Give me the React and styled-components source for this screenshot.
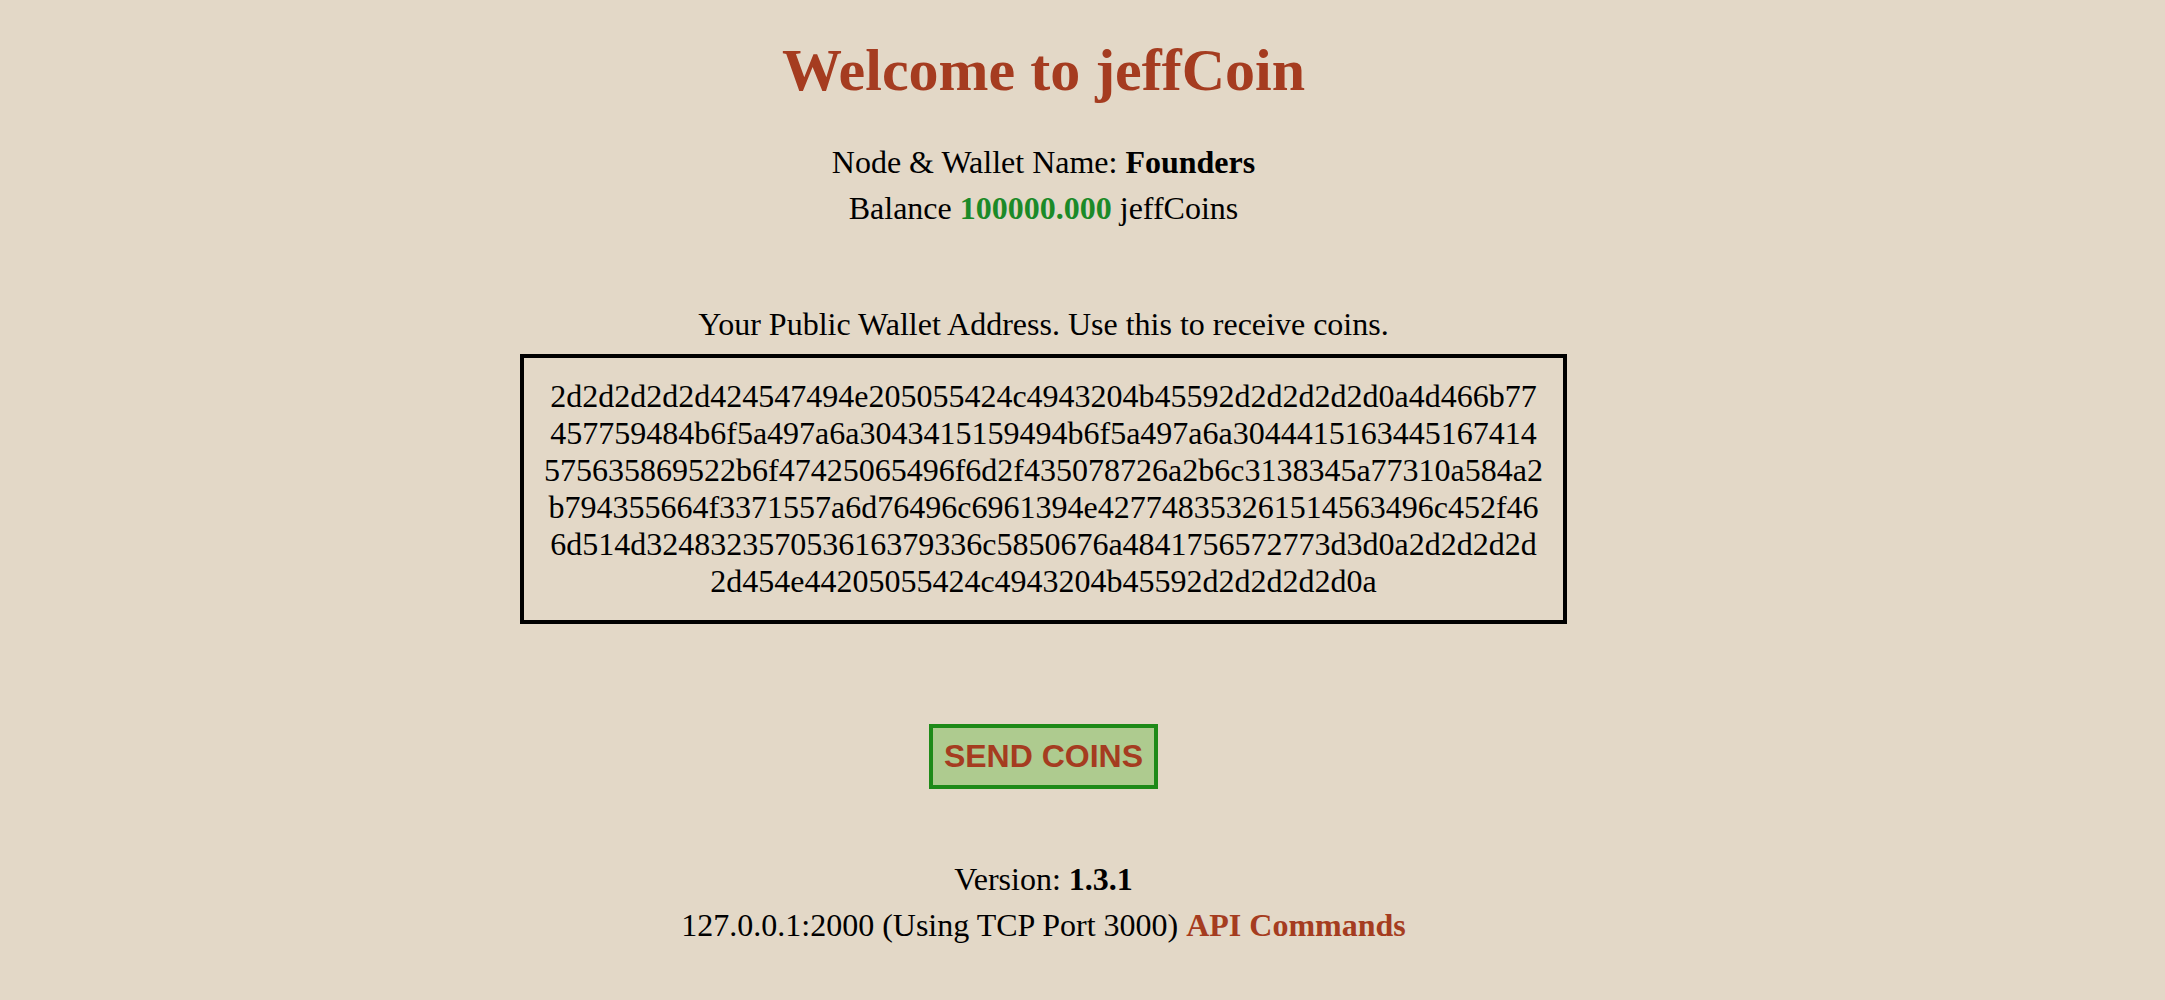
import React from 'react';
import styled, { createGlobalStyle } from 'styled-components';

const GlobalStyle = createGlobalStyle`
  html, body {
    margin: 0;
    background-color: #e3d8c7;
  }
  body {
    font-family: "Liberation Serif", "Times New Roman", serif;
    color: #000;
  }
`;

const rust = '#a53c20';

const Page = styled.div`
  display: flex;
  flex-direction: column;
  align-items: center;
  text-align: center;
  padding: 8px 86px 40px 8px;
  font-size: 32px;
`;

const Title = styled.h1`
  margin: 27px 0 0;
  font-size: 60px;
  line-height: 70px;
  font-weight: bold;
  color: ${rust};
`;

const InfoBlock = styled.div`
  margin-top: ${(p) => p.top || 0}px;
`;

const Line = styled.div`
  line-height: 46px;
  white-space: nowrap;
`;

const Strong = styled.b`
  color: ${(p) => p.color || 'inherit'};
`;

const AddressLabel = styled.div`
  margin-top: 70px;
  line-height: 46px;
`;

const AddressBox = styled.div`
  margin-top: 7px;
  width: 1001px;
  padding: 20px 19px;
  border: 4px solid #000;
  line-height: 37px;
  word-break: break-all;
  text-align: center;
`;

const SendButton = styled.button`
  margin-top: 100px;
  padding: 10px 11px;
  border: 4px solid #1e8a18;
  background-color: #aecb8f;
  color: ${rust};
  font-family: "Liberation Sans", Arial, sans-serif;
  font-size: 32px;
  font-weight: bold;
  line-height: 37px;
  cursor: pointer;
`;

const ApiLink = styled.a`
  color: ${rust};
  font-weight: bold;
  text-decoration: none;
`;

const walletAddress = [
  '2d2d2d2d2d424547494e205055424c4943204b45592d2d2d2d2d0a4d466b77',
  '457759484b6f5a497a6a3043415159494b6f5a497a6a3044415163445167414',
  '575635869522b6f47425065496f6d2f435078726a2b6c3138345a77310a584a2',
  'b794355664f3371557a6d76496c6961394e427748353261514563496c452f46',
  '6d514d324832357053616379336c5850676a4841756572773d3d0a2d2d2d2d',
  '2d454e44205055424c4943204b45592d2d2d2d2d0a',
].join('');

const node = {
  name: 'Founders',
  balance: '100000.000',
  version: '1.3.1',
  ip: '127.0.0.1',
  httpPort: 2000,
  tcpPort: 3000,
};

export default function App() {
  return (
    <>
      <GlobalStyle />
      <Page>
        <Title>Welcome to jeffCoin</Title>
        <InfoBlock top={34}>
          <Line>
            Node &amp; Wallet Name: <Strong>{node.name}</Strong>
          </Line>
          <Line>
            Balance <Strong color="#1b8a28">{node.balance}</Strong> jeffCoins
          </Line>
        </InfoBlock>
        <AddressLabel>Your Public Wallet Address. Use this to receive coins.</AddressLabel>
        <AddressBox>{walletAddress}</AddressBox>
        <SendButton type="button">SEND COINS</SendButton>
        <InfoBlock top={67}>
          <Line>
            Version: <Strong>{node.version}</Strong>
          </Line>
          <Line>
            {node.ip}:{node.httpPort} (Using TCP Port {node.tcpPort}){' '}
            <ApiLink href="#api">API Commands</ApiLink>
          </Line>
        </InfoBlock>
      </Page>
    </>
  );
}
